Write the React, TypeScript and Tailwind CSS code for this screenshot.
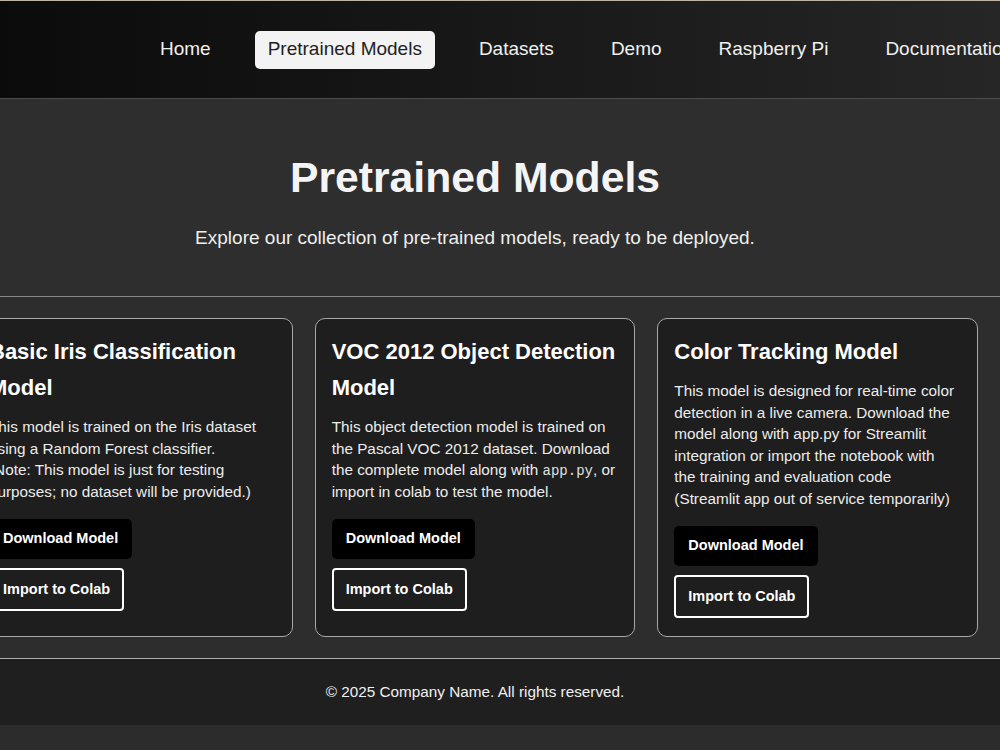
import React from "react";

const navItems = ["Home", "Pretrained Models", "Datasets", "Demo", "Raspberry Pi", "Documentation"];

function Buttons() {
  return (
    <div className="mt-[17px] flex flex-col items-start gap-[9px]">
      <button className="h-[40px] rounded-[5px] bg-black px-[14px] text-[14.5px] font-bold text-white">
        Download Model
      </button>
      <button className="h-[43px] rounded-[4px] border-2 border-white bg-transparent px-[12px] text-[14.5px] font-bold text-white">
        Import to Colab
      </button>
    </div>
  );
}

function Card({ title, children }: { title: string; children: React.ReactNode }) {
  return (
    <div className="rounded-[10px] border border-[#a8a8a8] bg-[#1e1e1e] pl-[16px] pr-[18px] pt-[15px] pb-[18px]">
      <h2 className="text-[22px] font-bold leading-[36px] text-white">{title}</h2>
      <p className="mt-[10px] text-[15.3px] leading-[21.5px] text-[#ececec]">{children}</p>
      <Buttons />
    </div>
  );
}

export default function App() {
  return (
    <div
      className="min-h-screen w-full overflow-hidden bg-[#2c2c2c]"
      style={{ fontFamily: '"Liberation Sans", Arial, sans-serif' }}
    >
      <div className="ml-[-50px] w-[1050px]">
        <div className="h-px bg-[#bfb3a3]" />
        <header className="flex h-[98px] items-center gap-[31px] whitespace-nowrap border-b border-[#4d4d4d] bg-linear-to-r from-[#0a0a0a] to-[#262626] pl-[197px]">
          {navItems.map((item) =>
            item === "Pretrained Models" ? (
              <span
                key={item}
                className="flex h-[38px] items-center rounded-[5px] bg-[#f3f3f3] px-[13px] text-[19px] text-[#222]"
              >
                {item}
              </span>
            ) : (
              <span key={item} className="flex h-[38px] items-center px-[13px] text-[19px] text-[#f0f0f0]">
                {item}
              </span>
            )
          )}
        </header>

        <section className="h-[198px] border-b border-[#858585] bg-[#2e2e2e] pt-[54px] text-center">
          <h1 className="text-[42.7px] font-bold leading-[49px] text-[#f4f4f4]">Pretrained Models</h1>
          <p className="mt-[25px] text-[19px] leading-[22px] text-[#efefef]">
            Explore our collection of pre-trained models, ready to be deployed.
          </p>
        </section>

        <section className="grid grid-cols-3 gap-[22px] bg-[#2d2d2d] px-[22px] pt-[21px] pb-[21px]">
          <Card title="Basic Iris Classification Model">
            This model is trained on the Iris dataset using a Random Forest classifier.
            <br />
            (Note: This model is just for testing purposes; no dataset will be provided.)
          </Card>
          <Card title="VOC 2012 Object Detection Model">
            This object detection model is trained on the Pascal VOC 2012 dataset. Download the complete model
            along with{" "}
            <code
              className="text-[14px] leading-[14px] text-[#e0e0e0]"
              style={{ fontFamily: '"Liberation Mono", "Courier New", monospace' }}
            >
              app.py
            </code>
            , or import in colab to test the model.
          </Card>
          <Card title="Color Tracking Model">
            This model is designed for real-time color detection in a live camera. Download the model along with
            app.py for Streamlit integration or import the notebook with the training and evaluation code
            <br />
            (Streamlit app out of service temporarily)
          </Card>
        </section>

        <footer className="flex h-[67px] items-center justify-center border-t border-[#b0b0b0] bg-[#1f1f1f] text-[15.3px] text-[#f0f0f0]">
          © 2025 Company Name. All rights reserved.
        </footer>
      </div>
    </div>
  );
}
